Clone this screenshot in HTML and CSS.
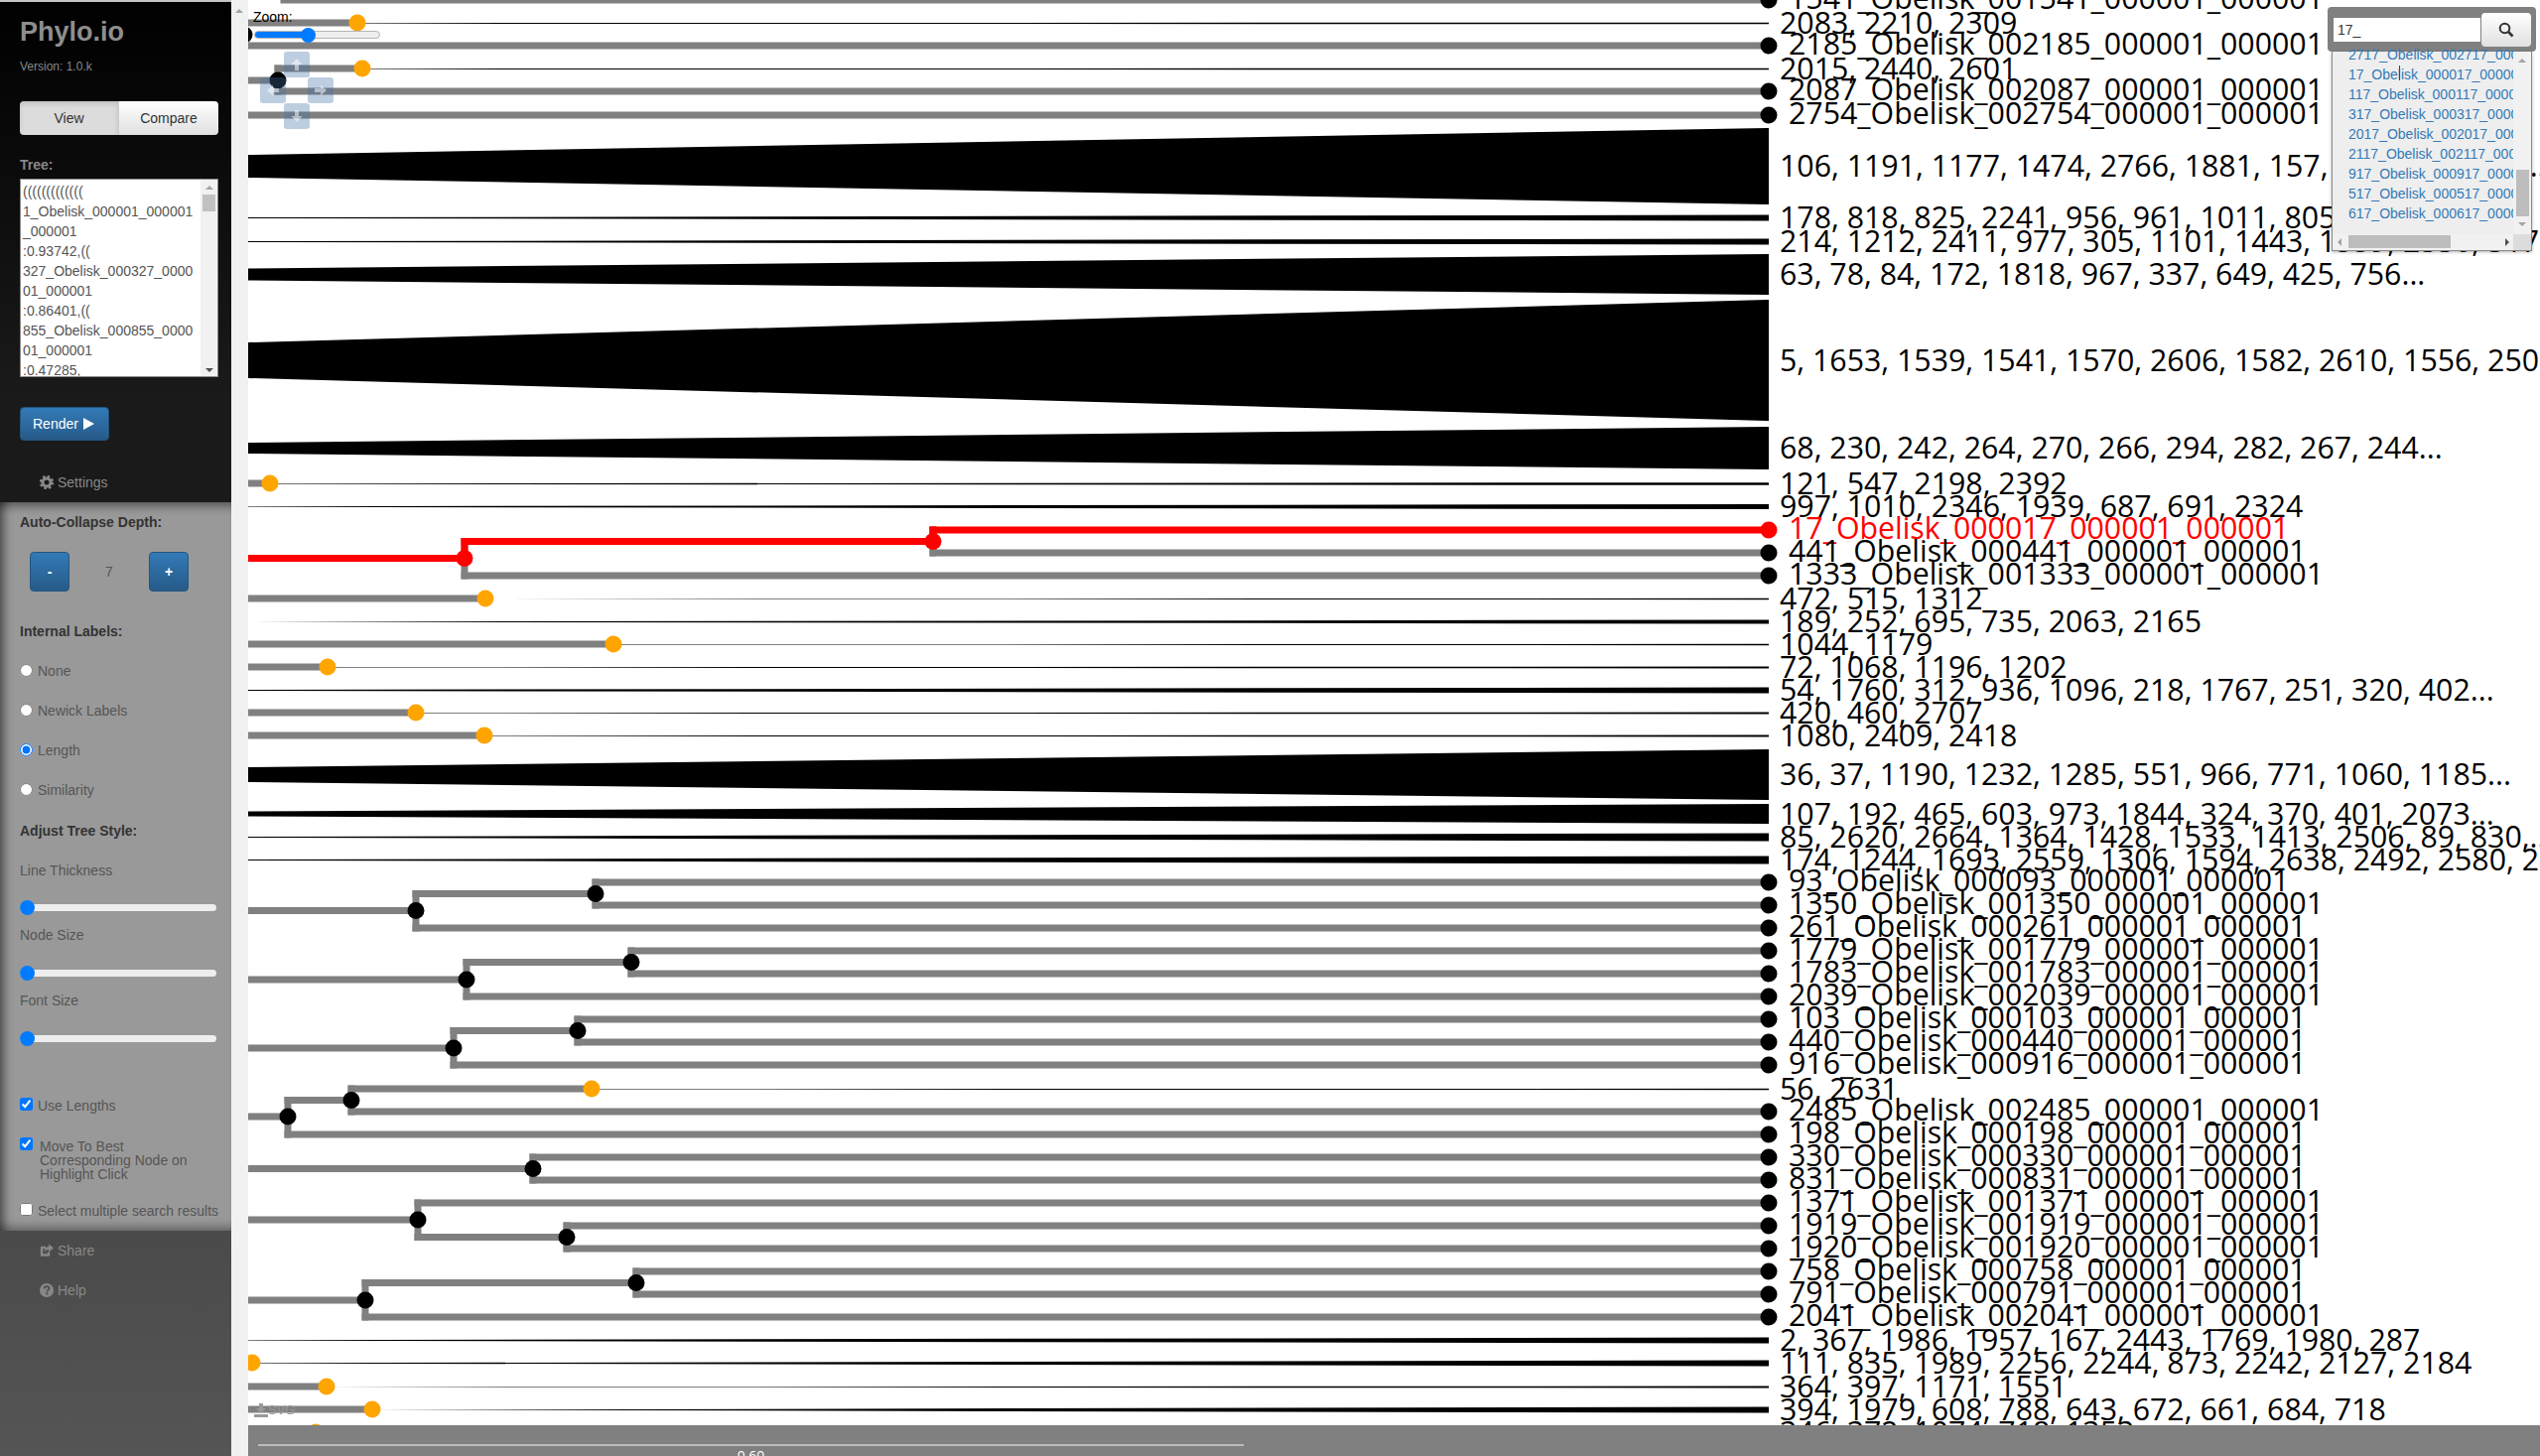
FILE: index.html
```html
<!DOCTYPE html>
<html lang="en">
<head>
    <meta charset="UTF-8">
    <title>Phylo.io</title>

    <link rel="stylesheet" href="styles.css">

</head>
<body>

<div class="page">

    <div class="sidebar">

        <div class="side_top">
            <div class="title">Phylo.io</div>
            <div class="version">Version: 1.0.k</div>

            <div class="mode_group">
                <div class="mode_btn active">View</div>
                <div class="mode_btn">Compare</div>
            </div>

            <div class="tree_label">Tree:</div>
            <div class="tree_box">
                <div class="tree_text">
                    <div>(((((((((((((</div>
                    <div>1_Obelisk_000001_000001</div>
                    <div>_000001</div>
                    <div>:0.93742,((</div>
                    <div>327_Obelisk_000327_0000</div>
                    <div>01_000001</div>
                    <div>:0.86401,((</div>
                    <div>855_Obelisk_000855_0000</div>
                    <div>01_000001</div>
                    <div>:0.47285,</div>
                </div>
                <div class="tree_scroll">
                    <span class="arrow_up"></span>
                    <span class="tree_thumb"></span>
                    <span class="arrow_down"></span>
                </div>
            </div>

            <div class="render_btn">Render
                <svg class="play_icon" width="12" height="14" viewBox="0 0 12 14"><path d="M0 1 L11 7 L0 13 Z" fill="#fff"/></svg>
            </div>

            <div class="nav_item settings_item">
                <svg class="nav_icon" width="14" height="14" viewBox="0 0 14 14">
                    <circle cx="7" cy="7" r="4" fill="none" stroke="#888" stroke-width="3"/>
                    <circle cx="7" cy="7" r="6" fill="none" stroke="#888" stroke-width="2.4" stroke-dasharray="2.4 2.31"/>
                </svg>
                Settings
            </div>
        </div>

        <div class="settings">
            <div class="heading">Auto-Collapse Depth:</div>
            <div class="depth_row">
                <div class="depth_btn">-</div>
                <div class="depth_val">7</div>
                <div class="depth_btn">+</div>
            </div>

            <div class="heading internal">Internal Labels:</div>
            <label class="radio_row first"><input type="radio" name="labels"> None</label>
            <label class="radio_row"><input type="radio" name="labels"> Newick Labels</label>
            <label class="radio_row"><input type="radio" name="labels" checked> Length</label>
            <label class="radio_row"><input type="radio" name="labels"> Similarity</label>

            <div class="heading adjust">Adjust Tree Style:</div>
            <div class="field first">Line Thickness</div>
            <input class="range" type="range" min="0" max="100" value="0">
            <div class="field">Node Size</div>
            <input class="range" type="range" min="0" max="100" value="0">
            <div class="field">Font Size</div>
            <input class="range" type="range" min="0" max="100" value="0">

            <label class="check_row lengths"><input type="checkbox" checked> Use Lengths</label>
            <label class="check_row move"><input type="checkbox" checked> <span>Move To Best Corresponding Node on Highlight Click</span></label>
            <label class="check_row multiple"><input type="checkbox"> Select multiple search results</label>
        </div>

        <div class="side_footer">
            <div class="nav_item">
                <svg class="nav_icon" width="14" height="14" viewBox="0 0 14 14">
                    <path d="M9 8.5 V11.5 H2 V4 H6" fill="none" stroke="#888" stroke-width="2.4" stroke-linejoin="round"/>
                    <path d="M9 0.5 L14 4.5 L9 8.5 V6 Q5.5 6 5 9 Q4.5 3 9 3 Z" fill="#888"/>
                </svg>
                Share
            </div>
            <div class="nav_item">
                <svg class="nav_icon" width="14" height="14" viewBox="0 0 14 14">
                    <circle cx="7" cy="7" r="7" fill="#888"/>
                    <path d="M4.6 5.4 Q4.8 3.2 7.1 3.2 Q9.5 3.2 9.5 5.1 Q9.5 6.3 8.2 7 Q7.4 7.4 7.4 8.4" fill="none" stroke="#4d4d4d" stroke-width="1.8"/>
                    <rect x="6.3" y="9.4" width="2.1" height="2" fill="#4d4d4d"/>
                </svg>
                Help
            </div>
        </div>
    </div>

    <div class="gutter"><span class="gutter_arrow"></span></div>

    <div class="main">
        <svg id="tree" class="tree_svg" viewBox="250 0 2309 1436" width="2309" height="1436"></svg>

        <div class="axis_bar">
            <div class="axis_scale">
                <div class="axis_line"></div>
                <div class="axis_text">0.60</div>
            </div>
        </div>

        <div class="zoom_box">
            <div class="zoom_label">Zoom:</div>
            <input class="zoom_range" type="range" min="0" max="100" value="42">
        </div>

        <div class="nav_pad">
            <div class="pad_btn pad_up"><svg width="14" height="14" viewBox="0 0 14 14"><path class="pad_arrow" d="M7 1 L12.5 7 H9 V13 H5 V7 H1.5 Z"/></svg></div>
            <div class="pad_btn pad_left"><svg class="turn_left" width="14" height="14" viewBox="0 0 14 14"><path class="pad_arrow" d="M7 1 L12.5 7 H9 V13 H5 V7 H1.5 Z"/></svg></div>
            <div class="pad_btn pad_right"><svg class="turn_right" width="14" height="14" viewBox="0 0 14 14"><path class="pad_arrow" d="M7 1 L12.5 7 H9 V13 H5 V7 H1.5 Z"/></svg></div>
            <div class="pad_btn pad_down"><svg class="turn_down" width="14" height="14" viewBox="0 0 14 14"><path class="pad_arrow" d="M7 1 L12.5 7 H9 V13 H5 V7 H1.5 Z"/></svg></div>
        </div>

        <div class="svg_export">
            <svg width="14" height="14" viewBox="0 0 14 14">
                <path d="M5 0 H9 V5 H12 L7 10 L2 5 H5 Z M0 11 H14 V14 H0 Z" fill="#999"/>
            </svg>
            <span>SVG</span>
        </div>

        <div class="search_box">
            <div class="search_head">
                <div class="search_input">17_</div>
                <div class="search_btn">
                    <svg width="16" height="16" viewBox="0 0 16 16">
                        <circle cx="6.5" cy="6.5" r="4.8" fill="none" stroke="#333" stroke-width="2"/>
                        <path d="M10 10 L14.5 14.5" stroke="#333" stroke-width="2.6"/>
                    </svg>
                </div>
            </div>
            <div class="search_results">
                <div class="results_body">
                    <div class="results_list">
                        <div>2717_Obelisk_002717_000001_000001</div>
                        <div>17_Obelisk_000017_000001_000001</div>
                        <div>117_Obelisk_000117_000001_000001</div>
                        <div>317_Obelisk_000317_000001_000001</div>
                        <div>2017_Obelisk_002017_000001_000001</div>
                        <div>2117_Obelisk_002117_000001_000001</div>
                        <div>917_Obelisk_000917_000001_000001</div>
                        <div>517_Obelisk_000517_000001_000001</div>
                        <div>617_Obelisk_000617_000001_000001</div>
                    </div>
                    <div class="results_vscroll">
                        <span class="arrow_up"></span>
                        <span class="results_vthumb"></span>
                        <span class="arrow_down"></span>
                    </div>
                </div>
                <div class="results_hscroll">
                    <span class="arrow_left"></span>
                    <span class="results_htrack"><span class="results_hthumb"></span></span>
                    <span class="arrow_right"></span>
                    <span class="results_corner"></span>
                </div>
            </div>
            <div class="text_caret"></div>
        </div>
    </div>

</div>

<script src="tree.js"></script>

</body>
</html>
```

FILE: styles.css
```css
*{
    box-sizing: border-box;
}

html, body{
    margin: 0;
    padding: 0;
    height: 100%;
    overflow: hidden;
    background-color: white;
    font-family: "Liberation Sans", Arial, sans-serif;
    font-size: 14px;
}

.page{
    display: flex;
    width: 2559px;
    height: 1467px;
}

/* left column */
.sidebar{
    width: 233px;
    display: flex;
    flex-direction: column;
    flex-shrink: 0;
}

.side_top{
    height: 506px;
    padding: 14px 13px 0 20px;
    background: linear-gradient(#000 0, #1a1a1a 400px);
    box-shadow: inset 0 2px 0 #c4c4c4;
    color: #888;
}

.title{
    height: 36px;
    line-height: 36px;
    font-size: 27px;
    font-weight: bold;
    color: #8e8e8e;
}

.version{
    margin-top: 7px;
    height: 20px;
    line-height: 20px;
    font-size: 12px;
}

.mode_group{
    display: flex;
    width: 200px;
    height: 34px;
    margin-top: 25px;
    border-radius: 4px;
    overflow: hidden;
}

.mode_btn{
    width: 100px;
    line-height: 34px;
    text-align: center;
    color: #333;
    background: linear-gradient(#fff, #e0e0e0);
}

.mode_btn.active{
    background: #dcdcdc;
    box-shadow: inset 0 3px 5px rgba(0, 0, 0, 0.125);
    border-right: 1px solid #ccc;
}

.tree_label{
    margin-top: 20px;
    height: 20px;
    line-height: 20px;
    font-weight: bold;
}

.tree_box{
    display: flex;
    width: 200px;
    height: 200px;
    margin-top: 4px;
    background-color: white;
    border: 1px solid #888;
    overflow: hidden;
}

.tree_text{
    flex: 1;
    padding: 2px 0 0 2px;
    line-height: 20px;
    color: #555;
    overflow: hidden;
    white-space: nowrap;
}

.tree_scroll{
    width: 17px;
    background-color: #f1f1f1;
    display: flex;
    flex-direction: column;
    align-items: center;
    padding-top: 6px;
}

.tree_thumb{
    width: 13px;
    height: 17px;
    margin-top: 5px;
    background-color: #c1c1c1;
}

.tree_scroll .arrow_down{
    margin-top: 158px;
    border-top-color: #505050;
}

.arrow_up, .arrow_down, .arrow_left, .arrow_right{
    display: block;
    width: 0;
    height: 0;
    border-style: solid;
    border-color: transparent;
}

.arrow_up{
    border-width: 0 4px 4px 4px;
    border-bottom-color: #a3a3a3;
}

.arrow_down{
    border-width: 4px 4px 0 4px;
    border-top-color: #a3a3a3;
}

.arrow_left{
    border-width: 4px 4px 4px 0;
    border-right-color: #a3a3a3;
}

.arrow_right{
    border-width: 4px 0 4px 4px;
    border-left-color: #505050;
}

.render_btn{
    display: flex;
    align-items: center;
    gap: 5px;
    width: 90px;
    height: 34px;
    margin-top: 30px;
    padding-left: 12px;
    color: white;
    background: linear-gradient(#337ab7, #265a88);
    border: 1px solid #245580;
    border-radius: 4px;
}

.nav_item{
    display: flex;
    align-items: center;
    gap: 4px;
    height: 20px;
    margin-left: 20px;
    color: #888;
}

.settings_item{
    margin-top: 32px;
}

/* settings panel */
.settings{
    height: 734px;
    padding: 10px 13px 0 20px;
    background-color: #999;
    color: #555;
    box-shadow: inset 12px 0 10px -8px rgba(0, 0, 0, 0.5),
                inset 0 12px 10px -8px rgba(0, 0, 0, 0.45),
                inset 0 -12px 10px -8px rgba(0, 0, 0, 0.35);
}

.heading{
    height: 20px;
    line-height: 20px;
    font-weight: bold;
    color: #333;
}

.depth_row{
    display: flex;
    justify-content: space-between;
    align-items: center;
    width: 160px;
    height: 40px;
    margin: 20px 0 0 10px;
}

.depth_btn{
    width: 40px;
    height: 40px;
    line-height: 38px;
    text-align: center;
    color: white;
    font-weight: bold;
    background: linear-gradient(#337ab7, #265a88);
    border: 1px solid #245580;
    border-radius: 4px;
}

.heading.internal{
    margin-top: 30px;
}

.radio_row{
    display: flex;
    align-items: center;
    gap: 5px;
    height: 20px;
    margin-top: 20px;
}

.radio_row input{
    width: 13px;
    height: 13px;
    margin: -2px 0 0 0;
}

.heading.adjust{
    margin-top: 21px;
}

.field{
    height: 20px;
    line-height: 20px;
    margin-top: 10px;
}

.field.first{
    margin-top: 20px;
}

.range{
    display: block;
    -webkit-appearance: none;
    appearance: none;
    width: 198px;
    height: 16px;
    margin: 20px 0 0 0;
    padding: 0;
    background: transparent;
}

.field.first + .range{
    margin-top: 19px;
}

.range::-webkit-slider-runnable-track{
    height: 7px;
    background-color: #eee;
    border-radius: 4px;
}

.range::-webkit-slider-thumb{
    -webkit-appearance: none;
    width: 15px;
    height: 15px;
    margin-top: -4px;
    background-color: #007bff;
    border-radius: 50%;
}

.check_row{
    display: flex;
    gap: 5px;
    line-height: 20px;
}

.check_row input{
    flex-shrink: 0;
    width: 13px;
    height: 13px;
    margin: 2px 0 0 0;
}

.check_row.lengths{
    height: 20px;
    margin-top: 50px;
}

.check_row.move{
    height: 44px;
    margin-top: 22px;
    line-height: 14px;
}

.check_row.move input{
    margin-top: 0;
}

.check_row.move span{
    margin: 2px 0 0 2px;
    width: 165px;
}

.check_row.multiple{
    height: 20px;
    margin-top: 20px;
    white-space: nowrap;
}

.side_footer{
    flex: 1;
    padding-top: 10px;
    background: linear-gradient(#4a4a4a, #555);
}

.side_footer .nav_item{
    margin-left: 40px;
    margin-bottom: 20px;
}

.gutter{
    width: 17px;
    flex-shrink: 0;
    padding: 9px 0 0 4px;
    background-color: #f1f1f1;
}

.gutter_arrow{
    display: block;
    width: 0;
    height: 0;
    border-style: solid;
    border-width: 0 4px 4px 4px;
    border-color: transparent transparent #a3a3a3 transparent;
}

/* tree canvas */
.main{
    position: relative;
    flex: 1;
    display: flex;
    flex-direction: column;
    overflow: hidden;
}

.tree_svg{
    display: block;
    flex-shrink: 0;
}

.tree_svg text{
    font-family: "Open Sans", "Noto Sans", sans-serif;
    font-size: 30.3px;
    fill: black;
}

.tree_svg text.hit{
    fill: red;
}

.edge{
    fill: none;
    stroke: #808080;
    stroke-width: 7;
    stroke-linecap: square;
}

.edge.hit{
    stroke: red;
}

.node{
    fill: black;
}

.node.hit{
    fill: red;
}

.node.closed{
    fill: orange;
}

.fan{
    fill: black;
}

.axis_bar{
    flex: 1;
    padding: 19px 0 0 10px;
    background-color: #808080;
    overflow: hidden;
}

.axis_scale{
    width: 993px;
}

.axis_line{
    height: 2px;
    background-color: #bbb;
}

.axis_text{
    margin-top: 1px;
    text-align: center;
    line-height: 18px;
    font-family: "Open Sans", sans-serif;
    font-size: 14px;
    color: white;
}

/* things that float over the tree */
.zoom_box{
    position: absolute;
    top: 7px;
    left: 5px;
}

.zoom_label{
    height: 20px;
    line-height: 20px;
    color: black;
}

.zoom_range{
    display: block;
    -webkit-appearance: none;
    appearance: none;
    width: 127px;
    height: 14px;
    margin: 1px 0 0 1px;
    padding: 0;
    background: transparent;
}

.zoom_range::-webkit-slider-runnable-track{
    height: 8px;
    background: linear-gradient(to right, #007bff 42%, #eee 42%);
    border: 1px solid #b5b5b5;
    border-radius: 4px;
}

.zoom_range::-webkit-slider-thumb{
    -webkit-appearance: none;
    width: 15px;
    height: 15px;
    margin-top: -4.5px;
    background-color: #007bff;
    border-radius: 50%;
}

.nav_pad{
    position: absolute;
    top: 52px;
    left: 12px;
    display: grid;
    grid-template-columns: 24px 24px 24px;
    grid-template-rows: 26px 26px 26px;
}

.pad_btn{
    display: flex;
    align-items: center;
    justify-content: center;
    width: 26px;
    height: 26px;
    background-color: rgba(70, 115, 170, 0.35);
    border-radius: 3px;
}

.pad_up{
    grid-column: 2;
    grid-row: 1;
}

.pad_left{
    grid-column: 1;
    grid-row: 2;
}

.pad_right{
    grid-column: 3;
    grid-row: 2;
}

.pad_down{
    grid-column: 2;
    grid-row: 3;
}

.pad_arrow{
    fill: rgba(255, 255, 255, 0.5);
}

.turn_left{
    transform: rotate(-90deg);
}

.turn_right{
    transform: rotate(90deg);
}

.turn_down{
    transform: rotate(180deg);
}

.svg_export{
    position: absolute;
    top: 1413px;
    left: 6px;
    display: flex;
    align-items: center;
    color: #999;
    font-size: 13px;
    line-height: 16px;
}

.search_box{
    position: absolute;
    top: 7px;
    left: 2095px;
    width: 210px;
}

.search_head{
    display: flex;
    align-items: center;
    gap: 1px;
    height: 45px;
    padding: 0 5px 0 6px;
    background-color: #808080;
    border-radius: 4px;
}

.search_input{
    width: 148px;
    height: 24px;
    padding-left: 4px;
    line-height: 25px;
    color: #333;
    background-color: white;
}

.search_btn{
    display: flex;
    align-items: center;
    justify-content: center;
    width: 50px;
    height: 34px;
    background: linear-gradient(#fff, #e0e0e0);
    border-radius: 4px;
}

.search_results{
    width: 202px;
    height: 201px;
    margin-left: 4px;
    background-color: #eee;
    border: 1px solid #8a8a8a;
    border-top: 0;
    box-shadow: 0 1px 3px rgba(0, 0, 0, 0.3);
}

.results_body{
    display: flex;
    height: 184px;
}

.results_list{
    flex: 1;
    margin-top: -7px;
    padding-left: 16px;
    line-height: 20px;
    color: #337ab7;
    white-space: nowrap;
    overflow: hidden;
}

.results_vscroll{
    width: 18px;
    display: flex;
    flex-direction: column;
    align-items: center;
    padding-top: 7px;
    background-color: #f1f1f1;
}

.results_vthumb{
    width: 13px;
    height: 47px;
    margin-top: 108px;
    background-color: #bdbdbd;
}

.results_vscroll .arrow_down{
    margin-top: 6px;
}

.results_hscroll{
    display: flex;
    align-items: center;
    height: 16px;
    padding-left: 5px;
    background-color: #f1f1f1;
}

.results_htrack{
    display: block;
    flex: 1;
    height: 16px;
    padding: 0 0 0 3px;
}

.results_hthumb{
    display: block;
    width: 103px;
    height: 13px;
    margin-top: 1px;
    margin-left: 4px;
    background-color: #bdbdbd;
}

.results_corner{
    display: block;
    width: 18px;
    height: 16px;
    margin-left: 4px;
    background-color: #dcdcdc;
}

.text_caret{
    position: absolute;
    top: 59px;
    left: 72px;
    width: 1px;
    height: 15px;
    background-color: #2b4a6f;
}
```

FILE: tree.js
```js
// right edge of the tree, where the tips and the collapsed fans end
const TIP_X = 1782;

// leaf rows: y, id, x where the branch starts
const leaves = [
    [0, 1541, 286], [46, 2185, 250], [92, 2087, 280], [116, 2754, 250],
    [534, 17, 940], [557, 441, 940], [580, 1333, 468],
    [889, 93, 600], [912, 1350, 600], [935, 261, 419],
    [958, 1779, 636], [981, 1783, 636], [1004, 2039, 470],
    [1027, 103, 582], [1050, 440, 582], [1073, 916, 457],
    [1120, 2485, 354], [1143, 198, 290],
    [1166, 330, 537], [1189, 831, 537],
    [1212, 1371, 421], [1235, 1919, 571], [1258, 1920, 571],
    [1281, 758, 641], [1304, 791, 641], [1327, 2041, 368]
];

// internal nodes: x, y, top child y, bottom child y, parent x
const inner = [
    [246, 35, 23, 46, null],
    [280, 81, 69, 92, 250],
    [468, 562.5, 545.5, 580, 250],
    [940, 545.5, 534, 557, 468],
    [600, 900.5, 889, 912, 419],
    [419, 917.5, 900.5, 935, 250],
    [636, 969.5, 958, 981, 470],
    [470, 987, 969.5, 1004, 250],
    [582, 1038.5, 1027, 1050, 457],
    [457, 1056, 1038.5, 1073, 250],
    [354, 1108.5, 1097, 1120, 290],
    [290, 1125, 1108.5, 1143, 250],
    [537, 1177.5, 1166, 1189, 250],
    [421, 1229, 1212, 1246.5, 250],
    [571, 1246.5, 1235, 1258, 421],
    [641, 1292.5, 1281, 1304, 368],
    [368, 1310, 1292.5, 1327, 250]
];

// collapsed fans with a visible orange node:
// y, node x, branch start, half width at the node, half width at the tips, label
const closed = [
    [23, 360, 250, 0.35, 0.8, "2083, 2210, 2309"],
    [69, 365, 280, 0.35, 0.8, "2015, 2440, 2601"],
    [487, 272, 250, 0.3, 1.3, "121, 547, 2198, 2392"],
    [603, 489, 250, 0, 0.7, "472, 515, 1312"],
    [649, 618, 250, 0.15, 0.7, "1044, 1179"],
    [672, 330, 250, 0.2, 1, "72, 1068, 1196, 1202"],
    [718, 419, 250, 0.3, 0.9, "420, 460, 2707"],
    [741, 488, 250, 0.3, 0.9, "1080, 2409, 2418"],
    [1097, 596, 354, 0.25, 0.7, "56, 2631"],
    [1373, 254, 250, 0.15, 3, "111, 835, 1989, 2256, 2244, 873, 2242, 2127, 2184"],
    [1397, 329, 250, 0.03, 1, "364, 397, 1171, 1551"],
    [1420, 375, 250, 0.03, 3, "394, 1979, 608, 788, 643, 672, 661, 684, 718"],
    [1443, 318, 250, 0, 2, "346, 372, 1074, 718, 1353"]
];

// collapsed fans cut by the left edge: y, half width at left, half width at the tips, label
const fans = [
    [167.5, 11.5, 38.5, "106, 1191, 1177, 1474, 2766, 1881, 157, 201, 214, 322..."],
    [219.5, 0.4, 3, "178, 818, 825, 2241, 956, 961, 1011, 805, 1100, 1337..."],
    [243.5, 0.4, 3, "214, 1212, 2411, 977, 305, 1101, 1443, 1559, 2330, 317"],
    [276.5, 6, 20.5, "63, 78, 84, 172, 1818, 967, 337, 649, 425, 756..."],
    [363, 18, 61, "5, 1653, 1539, 1541, 1570, 2606, 1582, 2610, 1556, 250..."],
    [451.5, 5.5, 21.5, "68, 230, 242, 264, 270, 266, 294, 282, 267, 244..."],
    [510.5, 0.35, 2.5, "997, 1010, 2346, 1939, 687, 691, 2324"],
    [626.5, 0.05, 2, "189, 252, 695, 735, 2063, 2165"],
    [695.5, 0.5, 3, "54, 1760, 312, 936, 1096, 218, 1767, 251, 320, 402..."],
    [780.5, 7.5, 25.5, "36, 37, 1190, 1232, 1285, 551, 966, 771, 1060, 1185..."],
    [820, 2.5, 10, "107, 192, 465, 603, 973, 1844, 324, 370, 401, 2073..."],
    [843.5, 0.5, 4, "85, 2620, 2664, 1364, 1428, 1533, 1413, 2506, 89, 830,..."],
    [866.5, 0.5, 4, "174, 1244, 1693, 2559, 1306, 1594, 2638, 2492, 2580, 2..."],
    [1350.5, 0.35, 3, "2, 367, 1986, 1957, 167, 2443, 1769, 1980, 287"]
];

const svg = document.getElementById("tree");

function add(tag, attrs, text) {
    const el = document.createElementNS("http://www.w3.org/2000/svg", tag);
    for (const key in attrs) {
        el.setAttribute(key, attrs[key]);
    }
    if (text) {
        el.textContent = text;
    }
    svg.appendChild(el);
}

function edge(d, cls) {
    add("path", {d: d, class: cls || "edge"});
}

function dot(x, y, cls) {
    add("circle", {cx: x, cy: y, r: 8.5, class: cls || "node"});
}

// triangles and labels first, branches on top
fans.forEach(function (f) {
    const y = f[0];
    add("polygon", {
        class: "fan",
        points: "250," + (y - f[1]) + " " + TIP_X + "," + (y - f[2]) + " " + TIP_X + "," + (y + f[2]) + " 250," + (y + f[1])
    });
    add("text", {x: 1793, y: Math.floor(y) + 10.5}, f[3]);
});

closed.forEach(function (c) {
    // half a pixel down so the thin fans sit on one pixel row
    const y = c[0] + 0.5;
    add("polygon", {
        class: "fan",
        points: c[1] + "," + (y - c[3]) + " " + TIP_X + "," + (y - c[4]) + " " + TIP_X + "," + (y + c[4]) + " " + c[1] + "," + (y + c[3])
    });
    edge("M" + c[2] + " " + c[0] + " H" + c[1]);
    add("text", {x: 1793, y: c[0] + 10.5}, c[5]);
});

inner.forEach(function (n) {
    edge("M" + n[0] + " " + n[2] + " V" + n[3]);
    if (n[4] !== null) {
        edge("M" + n[4] + " " + n[1] + " H" + n[0]);
    }
});

leaves.forEach(function (l) {
    const id = String(l[1]);
    const name = id + "_Obelisk_" + id.padStart(6, "0") + "_000001_000001";
    const hit = l[1] === 17;
    edge("M" + l[2] + " " + l[0] + " H" + TIP_X, hit ? "edge hit" : "edge");
    dot(TIP_X, l[0], hit ? "node hit" : "node");
    add("text", {x: 1802, y: l[0] + 9, class: hit ? "hit" : ""}, name);
});

// the highlighted path back to the left edge
edge("M250 562.5 H468 V545.5 H940 V534", "edge hit");

closed.forEach(function (c) {
    dot(c[1], c[0], "node closed");
});

inner.forEach(function (n) {
    const hit = n[0] === 468 || n[0] === 940;
    dot(n[0], n[1], hit ? "node hit" : "node");
});
```
